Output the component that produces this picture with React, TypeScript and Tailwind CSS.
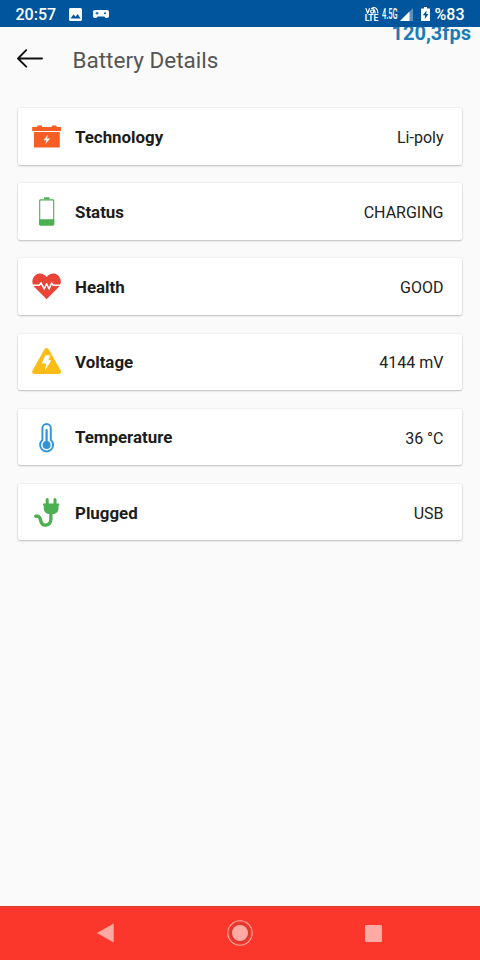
import type { ReactNode } from "react";

const CarBatteryIcon = () => (
  <svg className="w-[30px] h-[30px]" viewBox="0 0 30 30">
    <path
      fill="#f65e26"
      d="M.2 5h4.600l.8-1.600h4l.8 1.600h9l.8-1.600h4L25 5h4v4H.2zM2 10h25.800v15.500H2z"
    />
    <path fill="#fff" d="M16.200 12.500l-4.700 5.700h3l-1.300 4 4.900-5.800h-3.200z" />
  </svg>
);

const BatteryLevelIcon = () => (
  <svg className="w-[30px] h-[30px]" viewBox="0 0 30 30">
    <path fill="#4caf50" d="M12 .3h5.500v2H12z" />
    <rect x="7.700" y="2.900" width="14" height="25" rx=".8" fill="none" stroke="#4caf50" strokeWidth="1.100" />
    <path fill="#4caf50" d="M7.200 22.300h15v4.900a1.200 1.200 0 0 1-1.200 1.200H8.400a1.200 1.200 0 0 1-1.200-1.200z" />
  </svg>
);

const HeartPulseIcon = () => (
  <svg className="w-[30px] h-[30px]" viewBox="0 0 30 30">
    <path
      fill="#ea4338"
      d="M14.600 27.200L2.400 14.900C-.8 11.200-.1 5.600 3.700 2.900 7.200.5 11.800 1.500 14.600 5c2.800-3.500 7.400-4.500 10.900-2.100 3.800 2.700 4.500 8.300 1.300 12z"
    />
    <path
      fill="none"
      stroke="#fff"
      strokeWidth="1.500"
      strokeLinejoin="round"
      d="M0 13.200h7.400l1.700-2.400 3.100 6.200 2.400-5.300 2.500 5.300 2.500-6 1.600 2.200H30"
    />
  </svg>
);

const VoltageIcon = () => (
  <svg className="w-[30px] h-[30px]" viewBox="0 0 30 30">
    <path
      fill="#fbbc15"
      d="M12.500 2.200c1-1.700 3.200-1.700 4.200 0l12 21.200c1 1.800 0 3.600-2 3.600H2.500c-2 0-3-1.800-2-3.600z"
    />
    <path fill="#fff" d="M13.200 8.200h5l-1.900 5h3.100l-6.600 10.600 1.400-7.300H9.800z" />
  </svg>
);

const ThermometerIcon = () => (
  <svg className="w-[30px] h-[30px]" viewBox="0 0 30 30">
    <path
      fill="none"
      stroke="#2f94dc"
      strokeWidth="1.900"
      d="M10.400 17V5.200a4.200 4.200 0 0 1 8.400 0V17a6.500 6.500 0 1 1-8.400 0z"
    />
    <path fill="none" stroke="#2f94dc" strokeWidth="2.200" strokeLinecap="round" d="M14.600 7v14" />
    <circle cx="14.600" cy="21.900" r="4" fill="#2f94dc" />
  </svg>
);

const PlugIcon = () => (
  <svg className="w-[30px] h-[30px]" viewBox="0 0 30 30">
    <path fill="none" stroke="#4caf50" strokeWidth="3" strokeLinecap="round" d="M15.200 1.600v5M23 1.600v5" />
    <path
      fill="#4caf50"
      d="M12.200 5.400h13.900c1.600 0 1.700 2 .4 2.500v2.500c0 2.700-1.700 4.700-4.300 5.700h-6.100c-2.600-1-4.300-3-4.300-5.700V7.900c-1.300-.5-1.200-2.500.4-2.500z"
    />
    <path
      fill="none"
      stroke="#4caf50"
      strokeWidth="3.300"
      strokeLinecap="round"
      d="M3.700 18.200c3-.7 4.200.9 4.700 3.400.6 3.400 2.100 5.500 5 5.500 3.600 0 5.500-2.600 5.500-6.100v-5"
    />
  </svg>
);

const details: { label: string; value: string; icon: ReactNode }[] = [
  { label: "Technology", value: "Li-poly", icon: <CarBatteryIcon /> },
  { label: "Status", value: "CHARGING", icon: <BatteryLevelIcon /> },
  { label: "Health", value: "GOOD", icon: <HeartPulseIcon /> },
  { label: "Voltage", value: "4144 mV", icon: <VoltageIcon /> },
  { label: "Temperature", value: "36 °C", icon: <ThermometerIcon /> },
  { label: "Plugged", value: "USB", icon: <PlugIcon /> },
];

function StatusBar() {
  return (
    <div className="relative z-10 flex h-[27px] shrink-0 items-center bg-[#00559c] pl-[15.500px] pr-[15.500px] pt-px text-base font-medium text-white">
      <span className="pt-px leading-5">20:57</span>
      <svg className="ml-[13px] h-[13px] w-[13px]" viewBox="0 0 13 13">
        <path
          fill="#fff"
          fillRule="evenodd"
          d="M1.500 0h10A1.500 1.500 0 0 1 13 1.500v10a1.500 1.500 0 0 1-1.500 1.500h-10A1.500 1.500 0 0 1 0 11.500v-10A1.500 1.500 0 0 1 1.500 0zM1.500 10.500h10L8.700 6 6.600 8.800 4.500 6.500z"
        />
      </svg>
      <svg className="ml-[11px] h-2 w-4" viewBox="0 0 16 8">
        <path fill="#fff" d="M2 0h12c1.300 0 2 .7 2 2v4c0 1.300-.7 2-2 2-1.200 0-1.900-.5-2.600-1.500H4.600C3.900 7.500 3.200 8 2 8 .7 8 0 7.300 0 6V2C0 .7.7 0 2 0z" />
        <path stroke="#00559c" strokeWidth="1" d="M2.500 3.200h3M4 1.700v3" />
        <circle cx="12" cy="3.200" r="1" fill="#00559c" />
      </svg>

      <div className="ml-auto flex items-center">
        <div className="flex w-[14px] flex-col items-center font-bold">
          <svg className="h-[7px] w-[14px]" viewBox="0 0 14 7" fill="none" stroke="#fff" strokeWidth="1.200">
            <path d="M.8 1.200l1.900 5L4.600 1.200" />
            <circle cx="7.200" cy="4.600" r="1.600" />
            <path d="M6 1.500c2.200-.6 4.200 1.200 4.100 4.900M7.500.6c3.300-.6 5.400 1.600 5.400 5.600" />
          </svg>
          <span className="text-[8.500px] leading-[8px]">LTE</span>
        </div>
        <span className="ml-[3px] w-[14px] origin-left scale-x-[0.5] whitespace-nowrap text-[15px] leading-none">4.5G</span>
        <svg className="ml-[4px] h-[13px] w-[13px]" viewBox="0 0 13 13">
          <path fill="#fff" fillOpacity=".35" d="M13 0v13H0z" />
          <path fill="#fff" d="M9.500 3.500V13H0z" />
        </svg>
        <svg className="ml-2 h-[14px] w-[9px]" viewBox="0 0 9 14">
          <path fill="#fff" d="M3 0h3v1.500h3V14H0V1.500h3z" />
          <path fill="#00559c" d="M5.500 3.500L1.800 8.300h2.100v3.600l3.500-5H5.300z" />
        </svg>
        <span className="ml-[5px] pt-px leading-5">%83</span>
      </div>
    </div>
  );
}

function NavigationBar() {
  return (
    <div className="flex h-[54px] shrink-0 items-center justify-between border-t border-[#d93b30] bg-[#fa372a] pb-px pl-[97px] pr-[98px]">
      <svg className="h-5 w-[17px]" viewBox="0 0 17 20">
        <path fill="#fdaaa5" d="M0 10L16.700.5v19z" />
      </svg>
      <svg className="h-[26px] w-[26px]" viewBox="0 0 26 26">
        <circle cx="13" cy="13" r="12.200" fill="none" stroke="#fdaaa5" strokeWidth="1.100" />
        <circle cx="13" cy="13" r="9" fill="none" stroke="#d63a30" strokeWidth="2" />
        <circle cx="13" cy="13" r="8" fill="#fdaaa5" />
      </svg>
      <div className="h-[17px] w-[17px] rounded-[1px] bg-[#fdaaa5]" />
    </div>
  );
}

export default function App() {
  return (
    <div className="relative flex h-[960px] w-[480px] flex-col overflow-hidden bg-[#fafafa] font-[Roboto,sans-serif]">
      <StatusBar />
      {/* FPS overlay, tucked under the status bar */}
      <div className="absolute right-[9px] top-[21px] text-[20px] font-bold leading-6 text-[#1b7cb5]">120,3fps</div>

      <header className="flex h-[65px] shrink-0 items-center pl-[17px]">
        <svg className="-mt-[3px] h-[19px] w-[26px]" viewBox="0 0 26 19" fill="none" stroke="#111" strokeWidth="1.900" strokeLinecap="round" strokeLinejoin="round">
          <path d="M25 9.500H1M9.200 1.200L1 9.500l8.200 8.200" />
        </svg>
        <h1 className="ml-[29.500px] text-[22.500px] leading-[34px] text-[#555]">Battery Details</h1>
      </header>

      <main className="flex flex-1 flex-col gap-[18.700px] px-[18px] pt-[16px]">
        {details.map((item) => (
          <div
            key={item.label}
            className="flex h-[56.500px] shrink-0 items-center rounded-[2px] bg-white pl-[14px] pr-[18.500px] shadow-[0_1px_2px_rgba(0,0,0,0.22),0_0_2px_rgba(0,0,0,0.1)]"
          >
            <div className="pt-px">{item.icon}</div>
            <span className="ml-[13px] pt-[2px] text-[16.900px] font-bold text-[#1c1c1c]">{item.label}</span>
            <span className="ml-auto pt-[3px] text-[16px] text-[#222]">{item.value}</span>
          </div>
        ))}
      </main>

      <NavigationBar />
    </div>
  );
}
